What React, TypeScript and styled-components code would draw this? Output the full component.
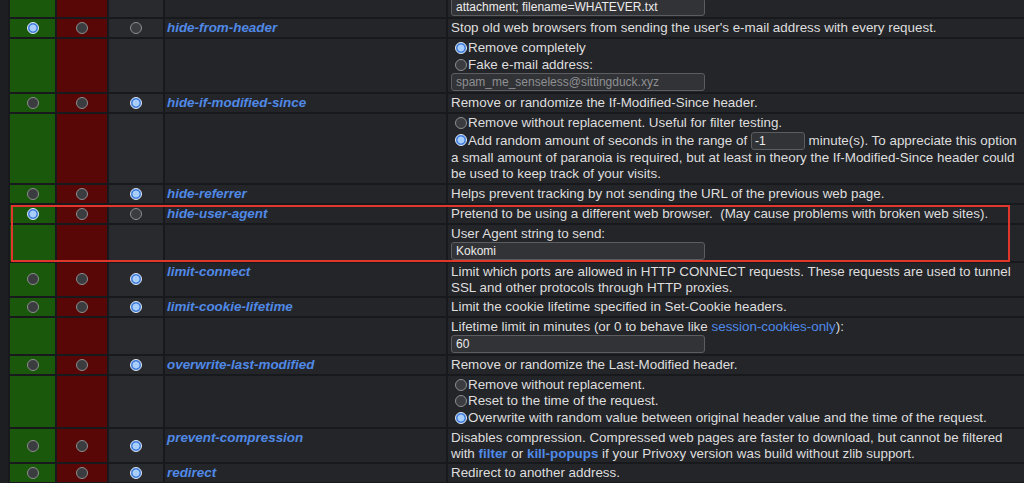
import React from 'react';
import styled, { createGlobalStyle } from 'styled-components';

const GlobalStyle = createGlobalStyle`
  html, body {
    margin: 0;
    padding: 0;
    background: #1d1e21;
  }
  body {
    font-family: "Liberation Sans", Arial, sans-serif;
    font-size: 13.4px;
    color: #dedede;
    overflow: hidden;
  }
`;

const Page = styled.div`
  position: relative;
  width: 1024px;
  height: 483px;
  overflow: hidden;
  padding-left: 8px;
  box-sizing: border-box;
`;

const Table = styled.table`
  border-collapse: separate;
  border-spacing: 2px;
  table-layout: fixed;
  width: 1019px;
  margin-top: -5px;
  background: #18191c;
`;

type Tone = 'enable' | 'disable' | 'none';

const toneColors: Record<Tone, string> = {
  enable: '#1a580b',
  disable: '#580606',
  none: '#292a2e',
};

const RadioCell = styled.td<{ $tone: Tone }>`
  background: ${p => toneColors[p.$tone]};
  text-align: center;
  vertical-align: middle;
  padding: 0;
  line-height: 0;
`;

const RadioSlot = styled.div`
  height: 18px;
  display: flex;
  align-items: center;
  justify-content: center;
`;

const NameCell = styled.td`
  background: #242529;
  vertical-align: top;
  padding: 1px 2px 0;
  line-height: 16px;
  font-weight: bold;
  font-style: italic;
  color: #5089e6;
`;

const DescCell = styled.td`
  background: #242529;
  vertical-align: top;
  padding: 1px 2px 0 3px;
  line-height: 16px;
`;

const DetailBody = styled.div`
  padding-bottom: 1px;
`;

const Dot = styled.span<{ $on?: boolean }>`
  display: inline-block;
  box-sizing: border-box;
  width: 12px;
  height: 12px;
  border-radius: 50%;
  border: ${p => (p.$on ? '1.5px solid #e4ecf8' : '1px solid #8e8e8e')};
  background: ${p =>
    p.$on
      ? 'radial-gradient(circle, #a9cefc 0 3.2px, #3f7ddc 3.8px)'
      : '#3b3c3f'};
`;

const InlineDot = styled(Dot)`
  vertical-align: -2px;
  margin: 0 1px 0 4px;
`;

const OptionLine = styled.div`
  line-height: 16.5px;
`;

const Field = styled.input<{ $dim?: boolean }>`
  display: block;
  box-sizing: border-box;
  width: 254px;
  height: 18px;
  margin: 0;
  padding: 0 4px;
  background: #323336;
  border: 1px solid #5c5d60;
  border-radius: 3px;
  font-family: "Liberation Sans", Arial, sans-serif;
  font-size: 12px;
  color: ${p => (p.$dim ? '#8e8f92' : '#ececec')};
  outline: none;
`;

const SmallField = styled(Field)`
  display: inline-block;
  width: 54px;
  vertical-align: middle;
  padding: 0 3px;
`;

const Link = styled.span<{ $bold?: boolean }>`
  color: #4f8ae8;
  font-weight: ${p => (p.$bold ? 'bold' : 'normal')};
`;

const Marker = styled.div`
  position: absolute;
  left: 11px;
  top: 205px;
  width: 999px;
  height: 57px;
  box-sizing: border-box;
  border: 2px solid #e0362c;
  pointer-events: none;
`;

const Option: React.FC<{ on?: boolean; children: React.ReactNode }> = ({
  on,
  children,
}) => (
  <OptionLine>
    <InlineDot $on={on} />
    {children}
  </OptionLine>
);

interface Entry {
  name: string;
  pick: 0 | 1 | 2;
  desc: React.ReactNode;
  detail?: React.ReactNode;
}

const entries: Entry[] = [
  {
    name: 'hide-from-header',
    pick: 0,
    desc: "Stop old web browsers from sending the user's e-mail address with every request.",
    detail: (
      <>
        <Option on>Remove completely</Option>
        <Option>Fake e-mail address:</Option>
        <Field $dim readOnly value='spam_me_senseless@sittingduck.xyz' />
      </>
    ),
  },
  {
    name: 'hide-if-modified-since',
    pick: 2,
    desc: 'Remove or randomize the If-Modified-Since header.',
    detail: (
      <>
        <Option>Remove without replacement. Useful for filter testing.</Option>
        <div>
          <InlineDot $on />
          Add random amount of seconds in the range of{' '}
          <SmallField readOnly value='-1' /> minute(s). To appreciate this
          option a small amount of paranoia is required, but at least in
          theory the If-Modified-Since header could be used to keep track of
          your visits.
        </div>
      </>
    ),
  },
  {
    name: 'hide-referrer',
    pick: 2,
    desc: 'Helps prevent tracking by not sending the URL of the previous web page.',
  },
  {
    name: 'hide-user-agent',
    pick: 0,
    desc: 'Pretend to be using a different web browser.\u00a0 (May cause problems with broken web sites).',
    detail: (
      <>
        <div>User Agent string to send:</div>
        <Field readOnly value='Kokomi' />
      </>
    ),
  },
  {
    name: 'limit-connect',
    pick: 2,
    desc: 'Limit which ports are allowed in HTTP CONNECT requests. These requests are used to tunnel SSL and other protocols through HTTP proxies.',
  },
  {
    name: 'limit-cookie-lifetime',
    pick: 2,
    desc: 'Limit the cookie lifetime specified in Set-Cookie headers.',
    detail: (
      <>
        <div>
          Lifetime limit in minutes (or 0 to behave like{' '}
          <Link>session-cookies-only</Link>):
        </div>
        <Field readOnly value='60' />
      </>
    ),
  },
  {
    name: 'overwrite-last-modified',
    pick: 2,
    desc: 'Remove or randomize the Last-Modified header.',
    detail: (
      <>
        <Option>Remove without replacement.</Option>
        <Option>Reset to the time of the request.</Option>
        <Option on>
          Overwrite with random value between original header value and the
          time of the request.
        </Option>
      </>
    ),
  },
  {
    name: 'prevent-compression',
    pick: 2,
    desc: (
      <>
        Disables compression. Compressed web pages are faster to download, but
        cannot be filtered with <Link $bold>filter</Link> or{' '}
        <Link $bold>kill-popups</Link> if your Privoxy version was build
        without zlib support.
      </>
    ),
  },
  {
    name: 'redirect',
    pick: 2,
    desc: 'Redirect to another address.',
  },
];

const tones: Tone[] = ['enable', 'disable', 'none'];

const RadioCells: React.FC<{ pick?: number }> = ({ pick }) => (
  <>
    {tones.map((t, i) => (
      <RadioCell key={t} $tone={t}>
        {pick !== undefined && (
          <RadioSlot>
            <Dot $on={pick === i} />
          </RadioSlot>
        )}
      </RadioCell>
    ))}
  </>
);

const DetailRow: React.FC<{ children: React.ReactNode }> = ({ children }) => (
  <tr>
    <RadioCells />
    <NameCell />
    <DescCell>
      <DetailBody>{children}</DetailBody>
    </DescCell>
  </tr>
);

const App: React.FC = () => (
  <Page>
    <GlobalStyle />
    <Table>
      <colgroup>
        <col style={{ width: 45 }} />
        <col style={{ width: 50 }} />
        <col style={{ width: 54 }} />
        <col style={{ width: 281 }} />
        <col style={{ width: 577 }} />
      </colgroup>
      <tbody>
        <DetailRow>
          <Field readOnly value='attachment; filename=WHATEVER.txt' />
        </DetailRow>
        {entries.map(e => (
          <React.Fragment key={e.name}>
            <tr>
              <RadioCells pick={e.pick} />
              <NameCell>{e.name}</NameCell>
              <DescCell>{e.desc}</DescCell>
            </tr>
            {e.detail && <DetailRow>{e.detail}</DetailRow>}
          </React.Fragment>
        ))}
      </tbody>
    </Table>
    <Marker />
  </Page>
);

export default App;
